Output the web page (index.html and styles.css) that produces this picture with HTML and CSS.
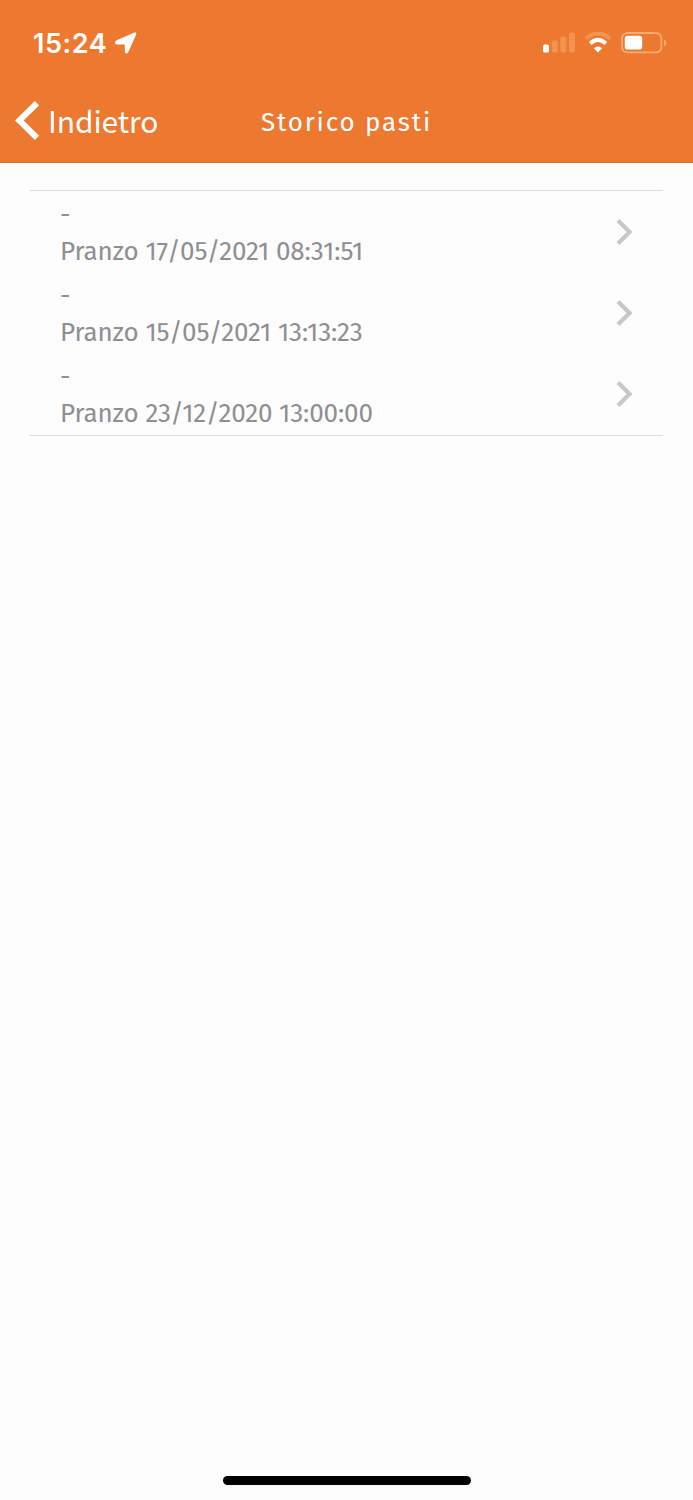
FILE: index.html
```html
<!DOCTYPE html>
<html lang="it">
<head>
<meta charset="utf-8">
<title>Storico pasti</title>
<link rel="stylesheet" href="styles.css">
</head>
<body>
<div class="screen">
  <header class="header">
    <div class="status">
      <div class="status-left">
        <span class="clock">15:24</span>
        <svg class="location" width="22" height="22" viewBox="0 0 22 22"><path d="M19.4.6 1.2 8.6C-.6 9.6 0 12.4 1.8 12.4L9 12.5Q9.7 12.5 9.7 13.2L9.9 19.8C10.1 21.9 12.5 21.9 13.2 20.2L21.2 2.4C21.8.9 20.8.1 19.4.6Z" fill="#fff"/></svg>
      </div>
      <div class="status-right">
        <svg width="33" height="21" viewBox="0 0 33 21"><rect x="0" y="12.5" width="6" height="8" rx="1.6" fill="#fff"/><g fill="#f2944f"><rect x="8.8" y="8.5" width="6" height="12" rx="1.6"/><rect x="17.3" y="4.5" width="6" height="16" rx="1.6"/><rect x="26" y=".5" width="6" height="20" rx="1.6"/></g></svg>
        <svg class="wifi" width="28" height="21" viewBox="0 0 28 21"><path d="M1.8 6.6Q14-4 26.2 6.6" fill="none" stroke="#f2944f" stroke-width="4"/><path d="M6.2 11.4Q14 4.4 21.8 11.4" fill="none" stroke="#fff" stroke-width="4"/><path d="M9.9 16.2Q14 12.8 18.1 16.2L14 20.4Z" fill="#fff"/></svg>
        <svg class="battery" width="46" height="22" viewBox="0 0 46 22"><rect x="1" y="1" width="39.4" height="19.4" rx="5.5" fill="none" stroke="#f5ab74" stroke-width="1.8"/><rect x="3.8" y="3.8" width="17.4" height="13.8" rx="2.8" fill="#fff"/><path d="M43 7.2Q45.4 8.5 45.4 10.8T43 14.4Z" fill="#f5ab74"/></svg>
      </div>
    </div>
    <nav class="navbar">
      <a class="back"><svg width="24" height="40" viewBox="0 0 24 40"><path d="M22 2.2 4.2 19.5 22 36.8" fill="none" stroke="#fff" stroke-width="6"/></svg><span class="back-label">Indietro</span></a>
      <h1 class="title">Storico pasti</h1>
    </nav>
  </header>
  <main class="meals">
    <a class="meal"><div><p class="name">-</p><p class="info">Pranzo 17/05/2021 08:31:51</p></div><svg class="chevron" width="17" height="28" viewBox="0 0 17 28"><path d="M2 2.4 13.6 14 2 25.6" fill="none" stroke="#c7c7cc" stroke-width="4.2"/></svg></a>
    <a class="meal"><div><p class="name">-</p><p class="info">Pranzo 15/05/2021 13:13:23</p></div><svg class="chevron" width="17" height="28" viewBox="0 0 17 28"><path d="M2 2.4 13.6 14 2 25.6" fill="none" stroke="#c7c7cc" stroke-width="4.2"/></svg></a>
    <a class="meal"><div><p class="name">-</p><p class="info">Pranzo 23/12/2020 13:00:00</p></div><svg class="chevron" width="17" height="28" viewBox="0 0 17 28"><path d="M2 2.4 13.6 14 2 25.6" fill="none" stroke="#c7c7cc" stroke-width="4.2"/></svg></a>
  </main>
  <div class="home-indicator"></div>
</div>
</body>
</html>
```
FILE: styles.css
```css
* { box-sizing: border-box; }
body { margin: 0; background: #fdfdfd; }
p, h1 { margin: 0; }
svg { display: block; flex: none; }
.screen {
  display: flex;
  flex-direction: column;
  width: 693px;
  height: 1500px;
  font-family: "Fira Sans", "Noto Sans", sans-serif;
}
.header {
  height: 163px;
  background: #ed782f;
  border-bottom: 1px solid #d66f30;
  color: #fff;
}
.status {
  display: flex;
  justify-content: space-between;
  align-items: center;
  height: 85px;
  padding: 0 26px 0 33px;
}
.status-left, .status-right { display: flex; align-items: center; }
.clock { font: 600 27px/32px Inter, sans-serif; letter-spacing: .6px; width: 74px; padding-top: 2px; white-space: nowrap; }
.location { margin-left: 8px; }
.wifi { margin-left: 8px; }
.battery { margin-left: 9px; }
.navbar {
  display: grid;
  grid-template-columns: 261px 1fr;
  align-items: center;
  height: 72px;
}
.back { display: flex; align-items: center; padding-left: 15px; height: 72px; }
.back-label { margin-left: 9px; padding-bottom: 3px; font-family: "Noto Sans CJK SC", "Noto Sans", sans-serif; font-size: 30px; line-height: 40px; letter-spacing: -.1px; }
.title { font-size: 26px; font-weight: 400; line-height: 36px; letter-spacing: 1.8px; padding-top: 4px; white-space: nowrap; }
.meals {
  margin: 27px 30px 0;
  border-top: 1px solid #dcdcdd;
  border-bottom: 1px solid #dcdcdd;
  height: 246px;
}
.meal {
  display: flex;
  justify-content: space-between;
  height: 81.2px;
  padding: 4.5px 30px 0;
  color: #8e8e93;
}
.name, .info { font-size: 26px; line-height: 37px; white-space: nowrap; }
.info { letter-spacing: -.13px; }
.chevron { margin-top: 22.5px; }
.home-indicator {
  width: 248px;
  height: 9px;
  margin: auto auto 15px 223px;
  border-radius: 5px;
  background: #000;
}
```
